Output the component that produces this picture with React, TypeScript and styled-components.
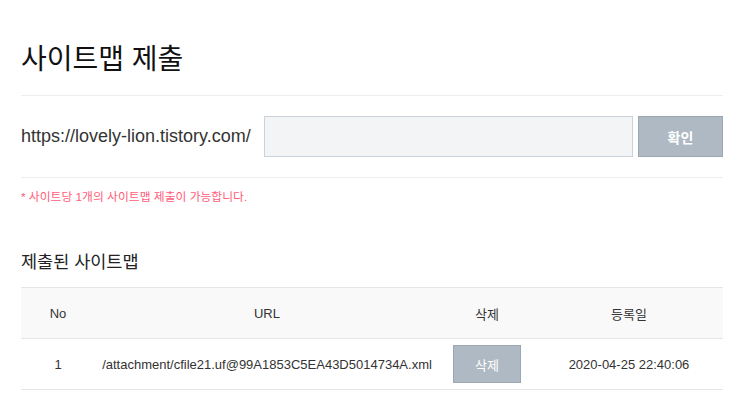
import styled, { createGlobalStyle } from "styled-components";

const GlobalStyle = createGlobalStyle`
  html, body {
    margin: 0;
    padding: 0;
    background: #fff;
  }
  body {
    font-family: "Liberation Sans", "Noto Sans CJK KR", sans-serif;
    color: #333;
  }
`;

const Page = styled.div`
  width: 702px;
  padding: 0 18px 0 21px;
`;

const Title = styled.h2`
  margin: 0;
  padding: 42px 0 18px;
  font-size: 28px;
  font-weight: normal;
  line-height: 35px;
  color: #111;
  border-bottom: 1px solid #eee;
`;

const FormRow = styled.div`
  display: flex;
  align-items: center;
  padding: 20px 0;
  border-bottom: 1px solid #eee;
`;

const SiteLabel = styled.span`
  font-size: 18px;
  color: #333;
  margin-right: 13px;
  white-space: nowrap;
`;

const UrlInput = styled.input`
  flex: 1;
  height: 41px;
  box-sizing: border-box;
  border: 1px solid #ccd2da;
  background: #f3f4f6;
  outline: none;
`;

const GrayButton = styled.button<{ $w: number; $h: number }>`
  width: ${(p) => p.$w}px;
  height: ${(p) => p.$h}px;
  box-sizing: border-box;
  border: 1px solid #9ba7b3;
  background: #afb9c3;
  color: #fff;
  font-family: inherit;
  font-size: 13px;
  padding: 0;
  cursor: pointer;
`;

const ConfirmButton = styled(GrayButton)`
  margin-left: 5px;
  font-size: 14px;
  font-weight: bold;
`;

const Note = styled.p`
  margin: 12px 0 0;
  font-size: 11.8px;
  line-height: 14px;
  color: #ff5c79;
`;

const SubTitle = styled.h3`
  margin: 46px 0 0;
  font-size: 17.5px;
  font-weight: normal;
  line-height: 24px;
  color: #222;
`;

const Table = styled.table`
  width: 100%;
  margin-top: 13px;
  border-collapse: collapse;
  font-size: 13px;
  color: #333;
`;

const HeadCell = styled.th<{ $w?: number }>`
  ${(p) => (p.$w ? `width: ${p.$w}px;` : "")}
  height: 50px;
  padding: 0;
  font-weight: normal;
  background: #f9f9f9;
  border-top: 1px solid #e5e5e5;
  border-bottom: 1px solid #e5e5e5;
  text-align: center;
`;

const Cell = styled.td`
  height: 50px;
  padding: 0;
  text-align: center;
  border-bottom: 1px solid #e5e5e5;
`;

const rows = [
  {
    no: 1,
    url: "/attachment/cfile21.uf@99A1853C5EA43D5014734A.xml",
    date: "2020-04-25 22:40:06",
  },
];

export default function App() {
  return (
    <>
      <GlobalStyle />
      <Page>
        <Title>사이트맵 제출</Title>
        <FormRow>
          <SiteLabel>https://lovely-lion.tistory.com/</SiteLabel>
          <UrlInput />
          <ConfirmButton $w={85} $h={41}>확인</ConfirmButton>
        </FormRow>
        <Note>* 사이트당 1개의 사이트맵 제출이 가능합니다.</Note>
        <SubTitle>제출된 사이트맵</SubTitle>
        <Table>
          <thead>
            <tr>
              <HeadCell $w={74}>No</HeadCell>
              <HeadCell $w={344}>URL</HeadCell>
              <HeadCell $w={96}>삭제</HeadCell>
              <HeadCell>등록일</HeadCell>
            </tr>
          </thead>
          <tbody>
            {rows.map((r) => (
              <tr key={r.no}>
                <Cell>{r.no}</Cell>
                <Cell>{r.url}</Cell>
                <Cell>
                  <GrayButton $w={68} $h={38}>삭제</GrayButton>
                </Cell>
                <Cell>{r.date}</Cell>
              </tr>
            ))}
          </tbody>
        </Table>
      </Page>
    </>
  );
}
